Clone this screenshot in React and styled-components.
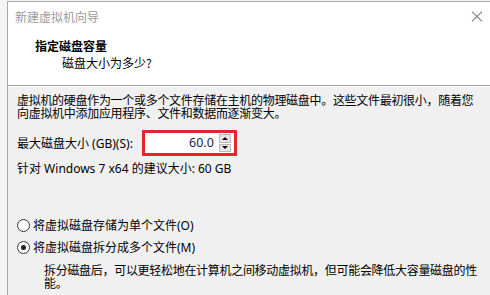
import React from 'react';
import styled, { createGlobalStyle } from 'styled-components';

const GlobalStyle = createGlobalStyle`
  html, body {
    margin: 0;
    padding: 0;
    background: #f4f4f4;
  }
  body {
    font-family: "Noto Sans", "Noto Sans CJK SC", sans-serif;
    font-size: 12px;
    color: #000;
  }
`;

const Page = styled.div`
  display: flex;
  width: 490px;
  height: 295px;
  padding-top: 1px;
  box-sizing: border-box;
  background: #f4f4f4;
  overflow: hidden;
`;

const Strip = styled.div`
  width: 7px;
  flex: none;
`;

const Wizard = styled.div`
  flex: 1;
  min-width: 0;
  overflow: hidden;
  display: flex;
  flex-direction: column;
  border-left: 1px solid #a9a9a9;
  border-top: 1px solid #a9a9a9;
  background: #f0f0f0;
`;

const TitleBar = styled.div`
  height: 28px;
  display: flex;
  align-items: center;
  justify-content: space-between;
  padding: 0 7px;
  background: #fff;
  color: #9b9b9b;
  font-family: "Noto Sans CJK SC", sans-serif;
`;

const Close = styled.span`
  flex: none;
  width: 12px;
  height: 12px;
  position: relative;
  &::before,
  &::after {
    content: '';
    position: absolute;
    left: -1px;
    top: 5.5px;
    width: 14px;
    height: 1px;
    background: #7a7a7a;
    transform: rotate(45deg);
  }
  &::after {
    transform: rotate(-45deg);
  }
`;

const Header = styled.div`
  height: 56px;
  box-sizing: border-box;
  padding: 9px 0 0 27px;
  background: #fff;
  border-bottom: 1px solid #a0a0a0;
  box-shadow: 0 1px 0 #fff;
  font-family: "Noto Sans CJK SC", sans-serif;
  line-height: 13px;
`;

const HeadTitle = styled.div`
  font-weight: bold;
`;

const HeadSub = styled.div`
  margin-top: 4px;
  padding-left: 27px;
`;

const Body = styled.div`
  padding: 8px 0 0 9px;
  display: flex;
  flex-direction: column;
`;

const Para = styled.div`
  line-height: 13px;
  white-space: nowrap;
  letter-spacing: -0.3px;
`;

const FieldRow = styled.div`
  display: flex;
  align-items: center;
  gap: 9px;
  margin-top: 10px;
`;

const RedFrame = styled.div`
  width: 95px;
  height: 26px;
  box-sizing: border-box;
  border: 3px solid #e3262b;
  display: flex;
  background: #fff;
`;

const NumInput = styled.div`
  flex: 1;
  text-align: right;
  padding-right: 5px;
  line-height: 20px;
  font-size: 12.5px;
  color: #1e2448;
`;

const Spin = styled.div`
  width: 12px;
  margin: 1px 3px 1px 0;
  display: flex;
  flex-direction: column;
  gap: 1px;
`;

const SpinBtn = styled.div`
  flex: 1;
  background: #e6e6e6;
  border: 1px solid #b8b8b8;
  display: flex;
  align-items: center;
  justify-content: center;
`;

const Arrow = styled.div`
  width: 0;
  height: 0;
  border-left: 3px solid transparent;
  border-right: 3px solid transparent;
  ${p => (p.down ? 'border-top: 3px solid #000;' : 'border-bottom: 3px solid #000;')}
`;

const Hint = styled.div`
  margin-top: 6px;
  line-height: 13px;
`;

const RadioGroup = styled.div`
  margin-top: 42px;
  display: flex;
  flex-direction: column;
  gap: 6px;
`;

const RadioRow = styled.div`
  display: flex;
  align-items: center;
  gap: 3px;
  height: 16px;
`;

const Circle = styled.span`
  width: 13px;
  height: 13px;
  box-sizing: border-box;
  border: 1px solid #333;
  border-radius: 50%;
  background: #fff;
  display: flex;
  align-items: center;
  justify-content: center;
  &::after {
    content: '';
    width: 5px;
    height: 5px;
    border-radius: 50%;
    background: ${p => (p.checked ? '#222' : 'transparent')};
  }
`;

const Note = styled.div`
  margin-top: 9px;
  padding-left: 27px;
  line-height: 13px;
  white-space: nowrap;
  letter-spacing: -0.3px;
`;

const Radio = ({ checked, children }) => (
  <RadioRow>
    <Circle checked={checked} />
    <span>{children}</span>
  </RadioRow>
);

export default function App() {
  return (
    <>
      <GlobalStyle />
      <Page>
        <Strip />
        <Wizard>
          <TitleBar>
            <span>新建虚拟机向导</span>
            <Close aria-label="关闭" />
          </TitleBar>
          <Header>
            <HeadTitle>指定磁盘容量</HeadTitle>
            <HeadSub>磁盘大小为多少?</HeadSub>
          </Header>
          <Body>
            <Para>虚拟机的硬盘作为一个或多个文件存储在主机的物理磁盘中。这些文件最初很小，随着您</Para>
            <Para>向虚拟机中添加应用程序、文件和数据而逐渐变大。</Para>
            <FieldRow>
              <span>最大磁盘大小 (GB)(S):</span>
              <RedFrame>
                <NumInput>60.0</NumInput>
                <Spin>
                  <SpinBtn><Arrow /></SpinBtn>
                  <SpinBtn><Arrow down /></SpinBtn>
                </Spin>
              </RedFrame>
            </FieldRow>
            <Hint>针对 Windows 7 x64 的建议大小: 60 GB</Hint>
            <RadioGroup>
              <Radio>将虚拟磁盘存储为单个文件(O)</Radio>
              <Radio checked>将虚拟磁盘拆分成多个文件(M)</Radio>
            </RadioGroup>
            <Note>
              拆分磁盘后，可以更轻松地在计算机之间移动虚拟机，但可能会降低大容量磁盘的性
              <br />
              能。
            </Note>
          </Body>
        </Wizard>
      </Page>
    </>
  );
}
